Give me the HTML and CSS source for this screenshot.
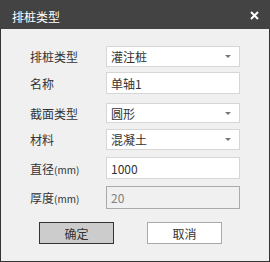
FILE: index.html
```html
<!DOCTYPE html>
<html lang="zh">
<head>
    <meta charset="utf-8">
    <title>排桩类型</title>
    <link rel="stylesheet" href="styles.css">
</head>
<body>
    <div class="dialog">
        <div class="top">
            <div class="top-title">排桩类型</div>
            <div class="close">
                <svg width="9" height="9" viewBox="0 0 9 9"><path d="M1 1L8 8M8 1L1 8" stroke="#fff" stroke-width="2"/></svg>
            </div>
        </div>
        <div class="form">
            <div class="row r1">
                <div class="label">排桩类型</div>
                <div class="select">灌注桩<span class="arrow"></span></div>
            </div>
            <div class="row r2">
                <div class="label">名称</div>
                <div class="input">单轴1</div>
            </div>
            <div class="row r3">
                <div class="label">截面类型</div>
                <div class="select">圆形<span class="arrow"></span></div>
            </div>
            <div class="row r4">
                <div class="label">材料</div>
                <div class="select">混凝土<span class="arrow"></span></div>
            </div>
            <div class="row r5">
                <div class="label">直径<span class="unit">(mm)</span></div>
                <div class="input">1000</div>
            </div>
            <div class="row r6">
                <div class="label">厚度<span class="unit">(mm)</span></div>
                <div class="input disabled">20</div>
            </div>
            <div class="buttons">
                <button class="btn ok">确定</button>
                <button class="btn cancel">取消</button>
            </div>
        </div>
    </div>
</body>
</html>
```

FILE: styles.css
```css
body{
    margin: 0;
    font-family: "Noto Sans CJK SC", "Liberation Sans", sans-serif;
    font-size: 12px;
}
.dialog{
    width: 270px;
    height: 262px;
    box-sizing: border-box;
    border: 1px solid rgb(51,51,51);
    border-top: 0;
    background-color: rgb(240,240,240);
}
.top{
    height: 29px;
    margin: 0 -1px;
    background-color: rgb(67,67,67);
    display: flex;
    justify-content: space-between;
    color: white;
}
.top-title{
    padding-left: 12px;
    padding-top: 10px;
    font-size: 12px;
    line-height: 14px;
}
.close{
    padding-top: 6px;
    padding-right: 11px;
}
.form{
    padding-top: 17px;
    padding-left: 29px;
}
.row{
    display: flex;
    align-items: center;
}
.label{
    width: 76px;
    color: rgb(51,51,51);
    font-size: 12px;
}
.unit{
    font-size: 10px;
}
.select, .input{
    position: relative;
    box-sizing: border-box;
    width: 134px;
    border: 1px solid rgb(214,214,214);
    background-color: white;
    padding-left: 4px;
    color: rgb(51,51,51);
    display: flex;
    align-items: center;
}
.select{
    height: 21px;
}
.input{
    height: 22px;
}
.arrow{
    position: absolute;
    right: 8px;
    top: 8px;
    border-left: 3px solid transparent;
    border-right: 3px solid transparent;
    border-top: 3px solid rgb(119,119,119);
}
.r2{ margin-top: 5px; }
.r3{ margin-top: 9px; }
.r3 .select{ height: 20px; }
.r4{ margin-top: 6px; }
.r5{ margin-top: 7px; }
.r6{ margin-top: 7px; }
.input.disabled{
    height: 23px;
    background-color: rgb(240,240,240);
    border-color: rgb(170,170,170);
    color: rgb(130,130,130);
}
.buttons{
    display: flex;
    gap: 33px;
    margin-top: 13px;
    padding-left: 9px;
}
.btn{
    width: 75px;
    height: 22px;
    box-sizing: border-box;
    font-family: "Noto Sans CJK SC", sans-serif;
    font-size: 12px;
    color: rgb(51,51,51);
    padding: 0;
}
.ok{
    background-color: rgb(204,204,204);
    border: 1px solid rgb(51,51,51);
}
.cancel{
    background-color: white;
    border: 1px solid rgb(170,170,170);
}
```
